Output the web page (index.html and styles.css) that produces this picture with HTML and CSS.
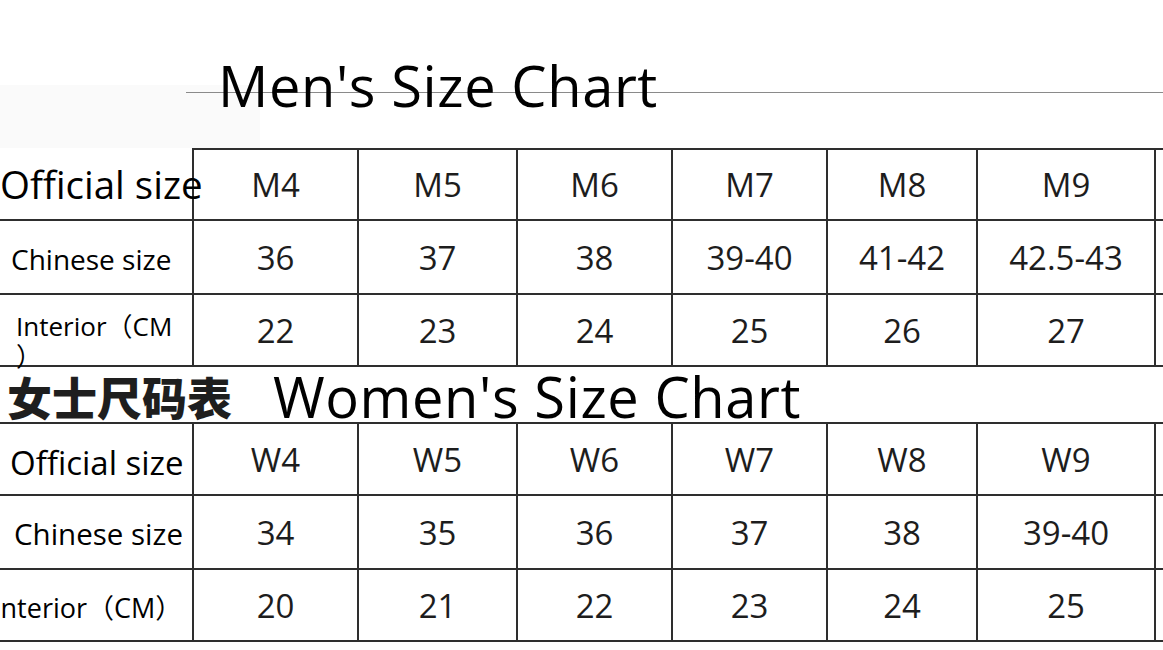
FILE: index.html
```html
<!DOCTYPE html>
<html lang="en">
<head>
<meta charset="utf-8">
<title>Size Chart</title>
<link rel="stylesheet" href="styles.css">
</head>
<body>
<div class="page">
  <header class="head">
    <h1 class="title">Men's Size Chart</h1>
  </header>

  <section class="chart men">
    <div class="cell label l-official">Official size</div>
    <div class="cell val top">M4</div>
    <div class="cell val top">M5</div>
    <div class="cell val top">M6</div>
    <div class="cell val top">M7</div>
    <div class="cell val top">M8</div>
    <div class="cell val top">M9</div>
    <div class="cell val top"></div>

    <div class="cell label l-chinese">Chinese size</div>
    <div class="cell val">36</div>
    <div class="cell val">37</div>
    <div class="cell val">38</div>
    <div class="cell val">39-40</div>
    <div class="cell val">41-42</div>
    <div class="cell val">42.5-43</div>
    <div class="cell val"></div>

    <div class="cell label l-interior">Interior（CM<br>）</div>
    <div class="cell val">22</div>
    <div class="cell val">23</div>
    <div class="cell val">24</div>
    <div class="cell val">25</div>
    <div class="cell val">26</div>
    <div class="cell val">27</div>
    <div class="cell val"></div>
  </section>

  <div class="band">
    <span class="cn">女士尺码表</span>
    <h2 class="title women-title">Women's Size Chart</h2>
  </div>

  <section class="chart women">
    <div class="cell label w-official">Official size</div>
    <div class="cell val">W4</div>
    <div class="cell val">W5</div>
    <div class="cell val">W6</div>
    <div class="cell val">W7</div>
    <div class="cell val">W8</div>
    <div class="cell val">W9</div>
    <div class="cell val"></div>

    <div class="cell label w-chinese">Chinese size</div>
    <div class="cell val">34</div>
    <div class="cell val">35</div>
    <div class="cell val">36</div>
    <div class="cell val">37</div>
    <div class="cell val">38</div>
    <div class="cell val">39-40</div>
    <div class="cell val"></div>

    <div class="cell label w-interior">Interior（CM）</div>
    <div class="cell val">20</div>
    <div class="cell val">21</div>
    <div class="cell val">22</div>
    <div class="cell val">23</div>
    <div class="cell val">24</div>
    <div class="cell val">25</div>
    <div class="cell val"></div>
  </section>
</div>
</body>
</html>
```

FILE: styles.css
```css
html, body {
  margin: 0;
  padding: 0;
  background: #fff;
  overflow: hidden;
}
body {
  font-family: "Open Sans", "Noto Sans CJK SC", sans-serif;
  color: #000;
}
.page {
  width: 1216px;
  height: 650px;
  overflow: hidden;
}
.head {
  box-sizing: border-box;
  height: 148px;
  padding: 57px 0 0 218px;
  background:
    linear-gradient(#8a8a8a, #8a8a8a) no-repeat 186px 92px / 100% 1px,
    linear-gradient(#fafafa, #fafafa) no-repeat 0 85px / 260px 63px;
}
.title {
  margin: 0;
  font-weight: 400;
  font-size: 56px;
  line-height: 56px;
  letter-spacing: 0.6px;
  white-space: nowrap;
}
.chart {
  display: grid;
  grid-template-columns: 194px 165px 159px 155px 155px 150px 178px 60px;
}
.men {
  grid-template-rows: 73px 74px 72px;
}
.women {
  grid-template-rows: 72px 74px 72px;
}
.cell {
  box-sizing: border-box;
  border-right: 2px solid #2e2e2e;
  border-bottom: 2px solid #2e2e2e;
  display: flex;
  align-items: center;
  justify-content: center;
  white-space: nowrap;
}
.top {
  border-top: 2px solid #2e2e2e;
}
.val {
  font-size: 33px;
  color: #1d1d1d;
}
.label {
  justify-content: flex-start;
  overflow: visible;
}
.l-official {
  font-size: 38.5px;
  padding-left: 0;
}
.l-chinese {
  font-size: 28px;
  padding-left: 11px;
  padding-top: 3px;
}
.l-interior {
  font-size: 26px;
  line-height: 30px;
  padding-left: 16px;
  white-space: normal;
  align-items: flex-start;
  padding-top: 16px;
}
.w-official {
  font-size: 33px;
  padding-left: 10px;
  padding-top: 6px;
}
.w-chinese {
  font-size: 29.5px;
  padding-left: 14px;
  padding-top: 2px;
}
.w-interior {
  font-size: 27px;
  padding-left: 0;
  text-indent: -7px;
  padding-top: 2px;
}
.band {
  box-sizing: border-box;
  height: 57px;
  border-bottom: 2px solid #2e2e2e;
  display: flex;
  align-items: center;
  padding-left: 7px;
}
.cn {
  font-family: "Noto Sans CJK SC", sans-serif;
  font-weight: 900;
  font-size: 45px;
  line-height: 45px;
  color: #1e1e1e;
  padding-top: 4px;
}
.women-title {
  margin-left: 41px;
  padding-top: 2px;
}
```
